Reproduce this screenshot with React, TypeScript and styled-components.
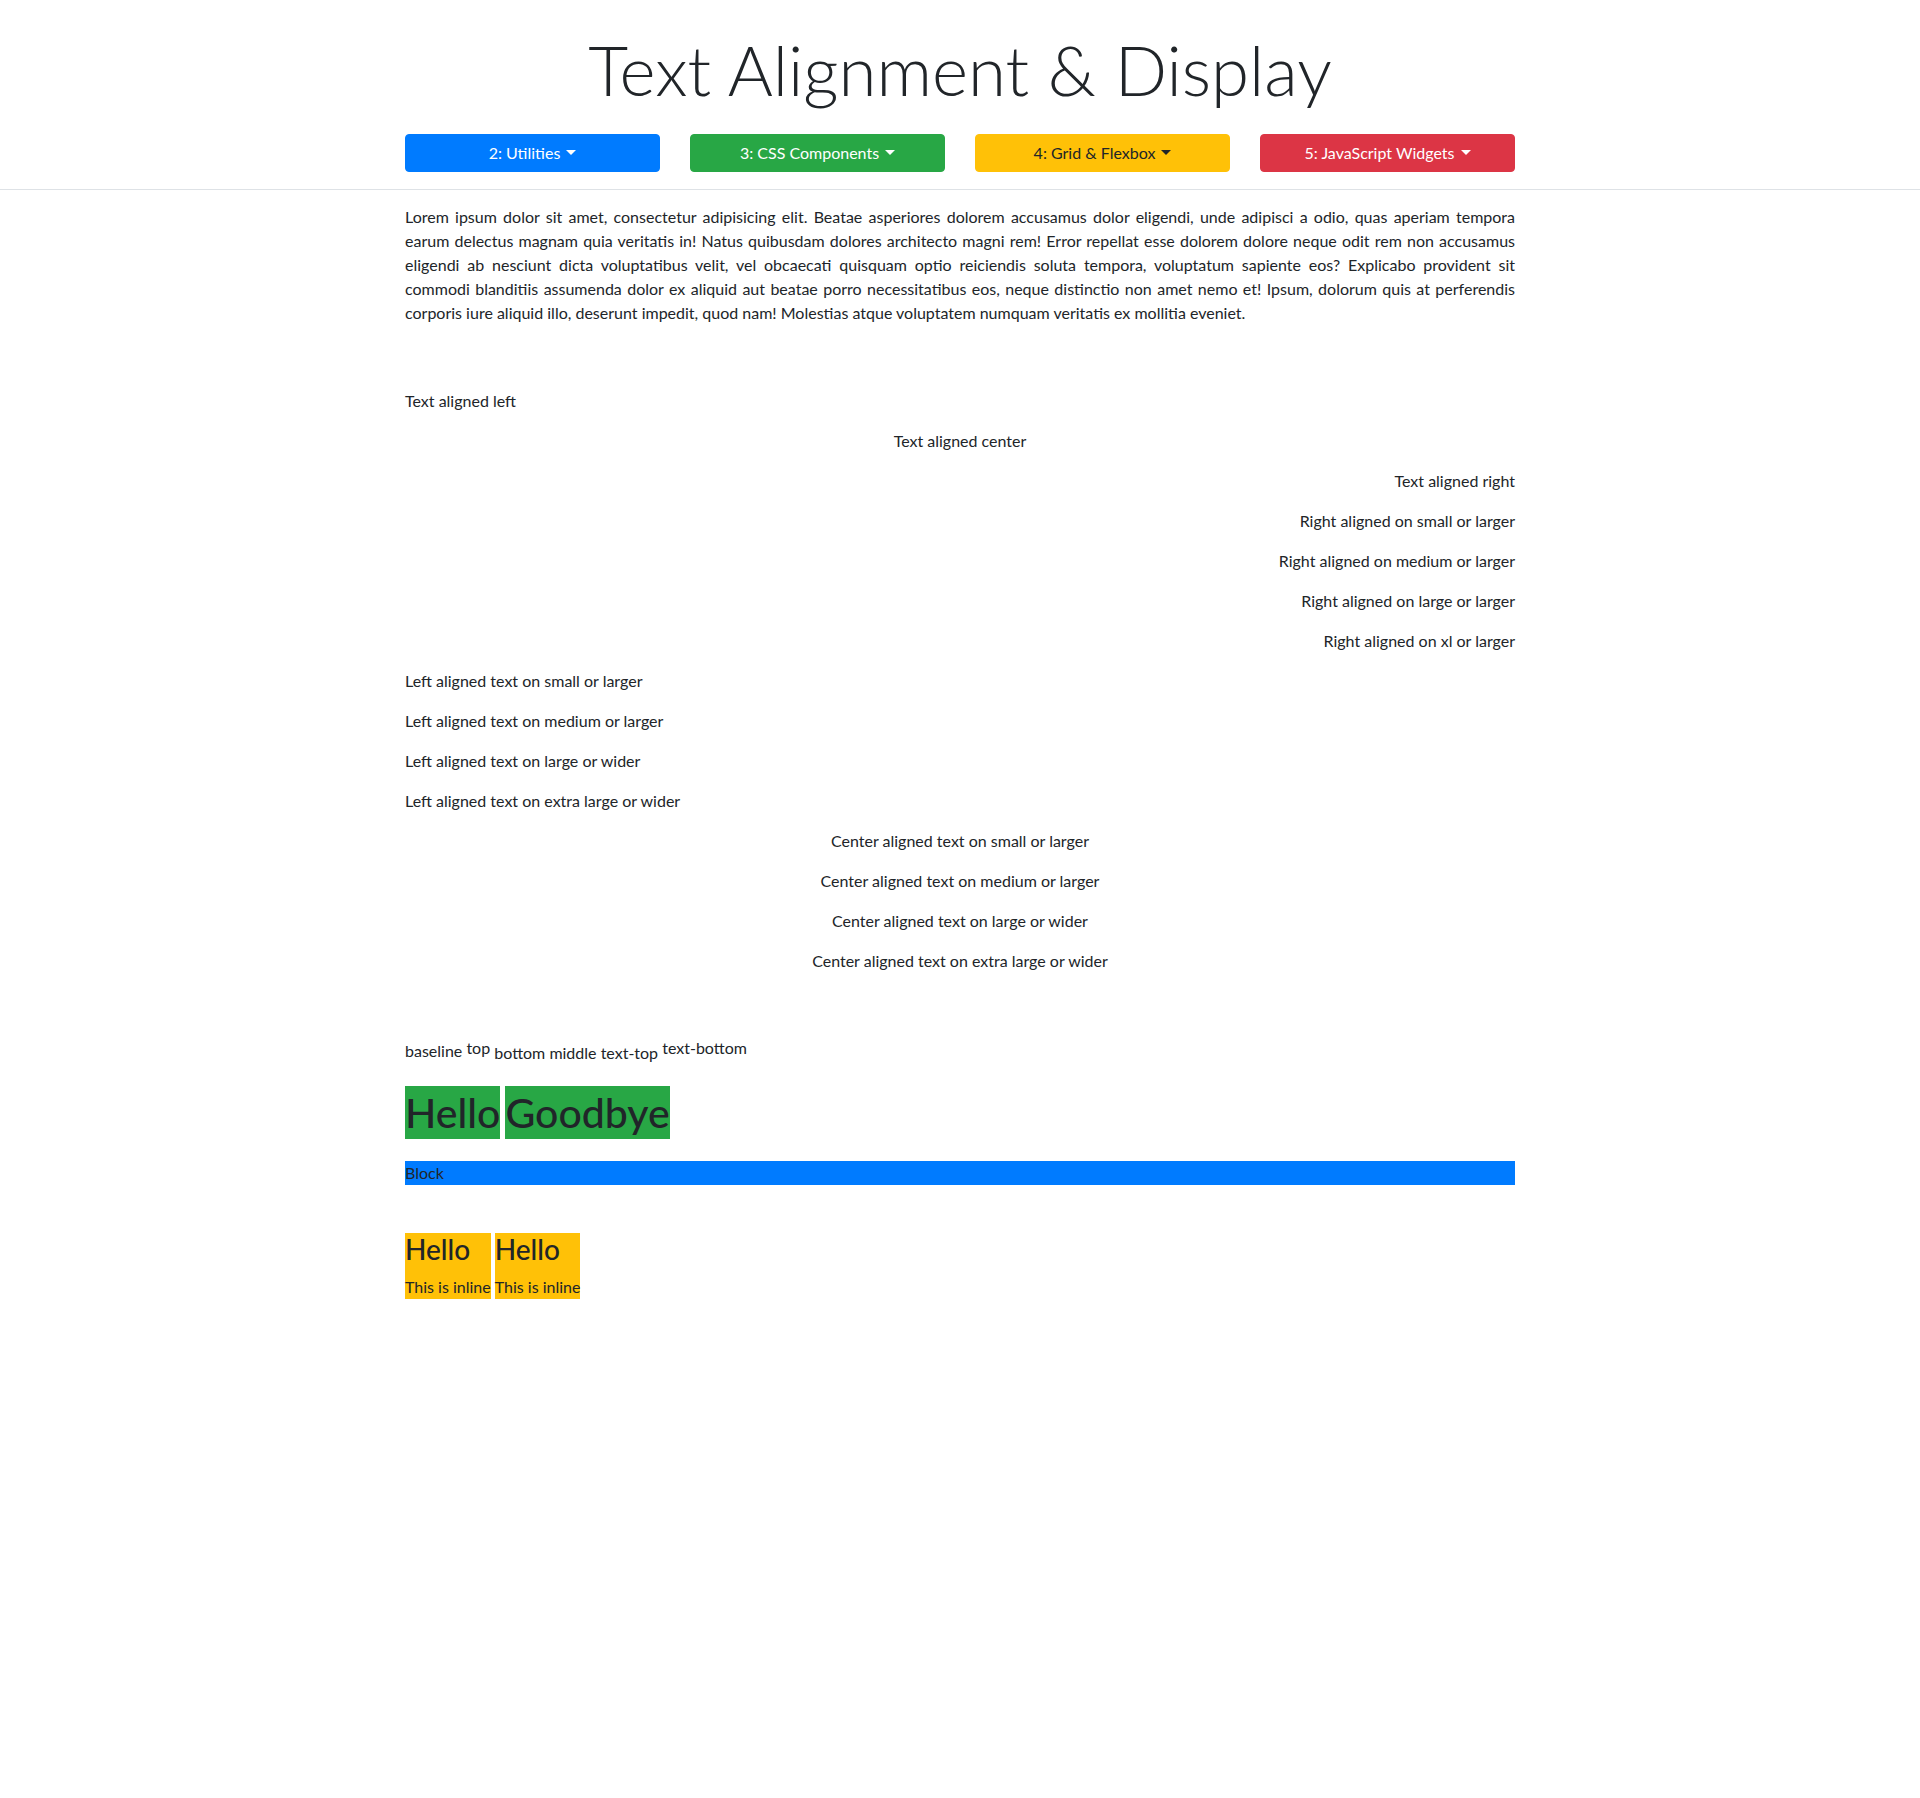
import * as React from 'react';
import styled, { createGlobalStyle } from 'styled-components';

const FONT = 'Lato, "Open Sans", sans-serif';

const GlobalStyle = createGlobalStyle`
  html, body {
    margin: 0;
    padding: 0;
    background: #fff;
  }
  body {
    font-family: ${FONT};
    font-size: 16px;
    line-height: 1.5;
    color: #212529;
  }
`;

const menus = [
  { label: '2: Utilities', bg: '#007bff', fg: '#fff' },
  { label: '3: CSS Components', bg: '#28a745', fg: '#fff' },
  { label: '4: Grid & Flexbox', bg: '#ffc107', fg: '#212529' },
  { label: '5: JavaScript Widgets', bg: '#dc3545', fg: '#fff' },
];

const rightLines = [
  'Right aligned on small or larger',
  'Right aligned on medium or larger',
  'Right aligned on large or larger',
  'Right aligned on xl or larger',
];

const leftLines = [
  'Left aligned text on small or larger',
  'Left aligned text on medium or larger',
  'Left aligned text on large or wider',
  'Left aligned text on extra large or wider',
];

const centerLines = [
  'Center aligned text on small or larger',
  'Center aligned text on medium or larger',
  'Center aligned text on large or wider',
  'Center aligned text on extra large or wider',
];

export default function App() {
  return (
    <>
      <GlobalStyle />
      <Header>
        <Container>
          <Title>Text Alignment &amp; Display</Title>
          <MenuRow>
            {menus.map((m) => (
              <MenuButton key={m.label} bg={m.bg} fg={m.fg}>
                {m.label}
                <Caret />
              </MenuButton>
            ))}
          </MenuRow>
        </Container>
      </Header>

      <Container>
        <Intro>
          Lorem ipsum dolor sit amet, consectetur adipisicing elit. Beatae asperiores dolorem accusamus dolor
          eligendi, unde adipisci a odio, quas aperiam tempora earum delectus magnam quia veritatis in! Natus
          quibusdam dolores architecto magni rem! Error repellat esse dolorem dolore neque odit rem non accusamus
          eligendi ab nesciunt dicta voluptatibus velit, vel obcaecati quisquam optio reiciendis soluta tempora,
          voluptatum sapiente eos? Explicabo provident sit commodi blanditiis assumenda dolor ex aliquid aut
          beatae porro necessitatibus eos, neque distinctio non amet nemo et! Ipsum, dolorum quis at perferendis
          corporis iure aliquid illo, deserunt impedit, quod nam! Molestias atque voluptatem numquam veritatis ex
          mollitia eveniet.
        </Intro>

        <AlignSection>
          <Line align="left">Text aligned left</Line>
          <Line align="center">Text aligned center</Line>
          <Line align="right">Text aligned right</Line>
          {rightLines.map((t) => (
            <Line key={t} align="right">{t}</Line>
          ))}
          {leftLines.map((t) => (
            <Line key={t} align="left">{t}</Line>
          ))}
          {centerLines.map((t) => (
            <Line key={t} align="center">{t}</Line>
          ))}
        </AlignSection>

        <VAlignRow>
          <VSpan v="baseline">baseline</VSpan> <VSpan v="top">top</VSpan>{' '}
          <VSpan v="bottom">bottom</VSpan> <VSpan v="middle">middle</VSpan>{' '}
          <VSpan v="text-top">text-top</VSpan> <VSpan v="text-bottom">text-bottom</VSpan>
        </VAlignRow>

        <GreenRow>
          <GreenWord>Hello</GreenWord>
          <GreenWord>Goodbye</GreenWord>
        </GreenRow>

        <BlockBar>Block</BlockBar>

        <InlineRow>
          <InlineCard>
            <CardTitle>Hello</CardTitle>
            <CardText>This is inline</CardText>
          </InlineCard>
          <InlineCard>
            <CardTitle>Hello</CardTitle>
            <CardText>This is inline</CardText>
          </InlineCard>
        </InlineRow>
      </Container>
    </>
  );
}

const Header = styled.header`
  border-bottom: 1px solid #dee2e6;
  padding-bottom: 17px;
`;

const Container = styled.div`
  width: 1110px;
  margin: 0 auto;
`;

const Title = styled.h1`
  margin: 27px 0 0;
  font-size: 69px;
  font-weight: 300;
  line-height: 86px;
  text-align: center;
`;

const MenuRow = styled.div`
  display: grid;
  grid-template-columns: repeat(4, 1fr);
  gap: 30px;
  margin-top: 21px;
`;

const MenuButton = styled.button<{ bg: string; fg: string }>`
  display: flex;
  align-items: center;
  justify-content: center;
  height: 38px;
  padding: 6px 12px;
  border: 1px solid ${(p) => p.bg};
  border-radius: 4px;
  background: ${(p) => p.bg};
  color: ${(p) => p.fg};
  font-family: ${FONT};
  font-size: 16px;
  line-height: 24px;
`;

const Caret = styled.span`
  display: inline-block;
  margin-left: 6px;
  margin-top: -2px;
  border-top: 5px solid currentColor;
  border-left: 5px solid transparent;
  border-right: 5px solid transparent;
`;

const Intro = styled.p`
  margin: 15px 0 0;
  text-align: justify;
`;

const AlignSection = styled.div`
  margin-top: 64px;
`;

const Line = styled.p<{ align: string }>`
  margin: 0 0 16px;
  text-align: ${(p) => p.align};
`;

const VAlignRow = styled.div`
  margin-top: 63px;
`;

const VSpan = styled.span<{ v: string }>`
  vertical-align: ${(p) => p.v};
`;

const GreenRow = styled.div`
  display: flex;
  gap: 5px;
  margin-top: 21px;
`;

const GreenWord = styled.span`
  display: inline-block;
  height: 53px;
  background: #28a745;
  font-size: 41px;
  font-weight: 500;
  line-height: 53px;
`;

const BlockBar = styled.div`
  margin-top: 22px;
  background: #007bff;
`;

const InlineRow = styled.div`
  display: flex;
  gap: 4px;
  align-items: flex-start;
  margin-top: 48px;
`;

const InlineCard = styled.div`
  background: #ffc107;
`;

const CardTitle = styled.h3`
  margin: 0 0 8px;
  font-size: 28px;
  font-weight: 500;
  line-height: 1.2;
`;

const CardText = styled.div`
  white-space: nowrap;
`;
